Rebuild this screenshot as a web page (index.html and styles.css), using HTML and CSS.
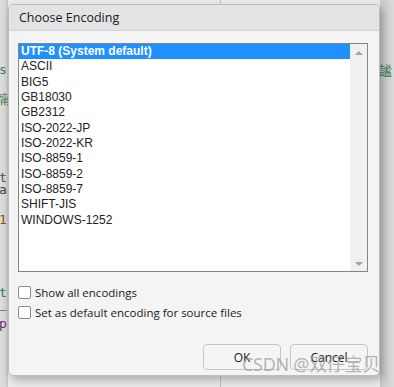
FILE: index.html
```html
<!DOCTYPE html>
<html lang="en">
<head>
    <meta charset="UTF-8">
    <title>Choose Encoding</title>
    <link rel="stylesheet" href="styles.css">
</head>
<body>
    <div class="editor">
        <div class="codigo">
            <div class="linha l1 verde">s'</div>
            <div class="linha l2 verde">甯</div>
            <div class="linha l3 azul">t:</div>
            <div class="linha l4 escuro">a</div>
            <div class="linha l5 laranja">1</div>
            <div class="linha l6 verde">t</div>
            <div class="linha l7 escuro">_</div>
            <div class="linha l8 roxo">p</div>
        </div>
        <div class="divisor"></div>
        <div class="codigo-direita">
            <div class="linha l1 verde">謐</div>
        </div>
    </div>

    <div class="dialogo">
        <div class="titulo">Choose Encoding</div>
        <div class="conteudo">
            <div class="lista">
                <ul class="itens">
                    <li class="selecionado">UTF-8 (System default)</li>
                    <li>ASCII</li>
                    <li>BIG5</li>
                    <li>GB18030</li>
                    <li>GB2312</li>
                    <li>ISO-2022-JP</li>
                    <li>ISO-2022-KR</li>
                    <li>ISO-8859-1</li>
                    <li>ISO-8859-2</li>
                    <li>ISO-8859-7</li>
                    <li>SHIFT-JIS</li>
                    <li>WINDOWS-1252</li>
                </ul>
                <div class="rolagem">
                    <span class="seta cima"></span>
                    <span class="seta baixo"></span>
                </div>
            </div>

            <label class="opcao"><span class="caixa"></span>Show all encodings</label>
            <label class="opcao"><span class="caixa"></span>Set as default encoding for source files</label>

            <div class="botoes">
                <button type="button">OK</button>
                <button type="button">Cancel</button>
            </div>
        </div>
    </div>

    <div class="marca">CSDN @双仔宝贝</div>
</body>
</html>
```

FILE: styles.css
```css
/* Variáveis globais */
:root {
    --fonte-ui: 'Open Sans', 'Noto Sans', sans-serif;
    --fonte-lista: 'Liberation Sans', Arial, sans-serif;
    --cor-dialogo: #f3f4f3;
    --cor-titulo: #e3e3e5;
    --cor-selecao: #1e90ff;
    --cor-borda: #858585;
}

body {
    margin: 0;
    width: 394px;
    height: 387px;
    overflow: hidden;
    position: relative;
    background: #dcdcdc;
    font-family: var(--fonte-ui);
}

/* Editor atrás do diálogo */
.editor {
    display: flex;
    height: 100%;
    background: linear-gradient(to right, #dedede 0, #d6d6d6 6px, #c0c0c0 8px, #ececec 8px);
}

.codigo {
    width: 220px;
    padding-top: 62px;
    font-family: 'DejaVu Sans Mono', monospace;
    font-size: 13px;
}

.linha {
    height: 16px;
    line-height: 16px;
    margin-left: -1px;
}

.l2 { margin-top: 14px; }
.l3 { margin-top: 62px; }
.l4 { margin-top: -2px; height: 12px; line-height: 12px; }
.l5 { margin-top: 16px; }
.l6 { margin-top: 57px; }
.l7 { margin-top: -3px; height: 12px; line-height: 12px; }
.l8 { margin-top: 6px; }

.verde { color: #3a7a52; }
.azul { color: #2a5d6a; }
.escuro { color: #444444; }
.laranja { color: #8a5a00; }
.roxo { color: #6b2a6b; }

.divisor {
    width: 1px;
    background: #c4c4c4;
}

.codigo-direita {
    flex: 1;
    padding-top: 62px;
    padding-left: 159px;
    font-family: 'Noto Sans CJK SC', sans-serif;
    font-size: 13px;
    background: linear-gradient(to right, transparent 159px, #c9c9c9 159px, #dadada 172px);
}

/* Diálogo */
.dialogo {
    position: absolute;
    left: 8px;
    top: 4px;
    width: 372px;
    height: 372px;
    background: var(--cor-dialogo);
    border: 1px solid #bdbdbd;
    border-radius: 5px;
    box-sizing: border-box;
    box-shadow: 3px 4px 10px rgba(0, 0, 0, 0.28);
    overflow: hidden;
}

.titulo {
    height: 25px;
    line-height: 26px;
    padding-left: 10px;
    background: var(--cor-titulo);
    border-bottom: 1px solid #d4d4d6;
    font-size: 12.5px;
    color: #1a1a1a;
}

.conteudo {
    padding: 12px 11px 0 9px;
}

.lista {
    display: flex;
    height: 229px;
    border: 1px solid var(--cor-borda);
    background: #ffffff;
    box-sizing: border-box;
}

.itens {
    flex: 1;
    list-style: none;
    margin: 0;
    padding: 0;
    font-family: var(--fonte-lista);
    font-size: 12px;
    color: #222222;
}

.itens li {
    height: 15.33px;
    line-height: 15.33px;
    padding-left: 2px;
}

.itens .selecionado {
    background: var(--cor-selecao);
    color: #ffffff;
    font-weight: bold;
}

.rolagem {
    width: 17px;
    background: #f0f0f0;
    display: flex;
    flex-direction: column;
    justify-content: space-between;
    align-items: center;
    padding: 7px 0 5px;
}

.seta {
    width: 0;
    height: 0;
    border-left: 4px solid transparent;
    border-right: 4px solid transparent;
}

.cima {
    border-bottom: 4px solid #a3a3a3;
}

.baixo {
    border-top: 4px solid #a3a3a3;
}

.opcao {
    display: flex;
    align-items: center;
    gap: 4px;
    font-size: 11.5px;
    color: #1a1a1a;
    height: 14px;
    margin-top: 6px;
}

.opcao:first-of-type {
    margin-top: 13px;
}

.caixa {
    width: 11px;
    height: 11px;
    border: 1px solid #8c8c8c;
    border-radius: 2px;
    background: #ffffff;
}

.botoes {
    display: flex;
    justify-content: flex-end;
    gap: 9px;
    margin-top: 25px;
}

button {
    width: 78px;
    height: 26px;
    font-family: var(--fonte-ui);
    font-size: 12px;
    color: #1a1a1a;
    background: #f5f5f5;
    border: 1px solid #c6c6c6;
    border-radius: 4px;
    padding: 0;
}

/* Marca d'água */
.marca {
    position: absolute;
    left: 242px;
    top: 352px;
    font-family: 'Noto Sans', 'Noto Sans CJK SC', sans-serif;
    font-size: 18px;
    line-height: 24px;
    color: rgba(150, 150, 150, 0.7);
    white-space: nowrap;
    letter-spacing: -0.3px;
}
```
